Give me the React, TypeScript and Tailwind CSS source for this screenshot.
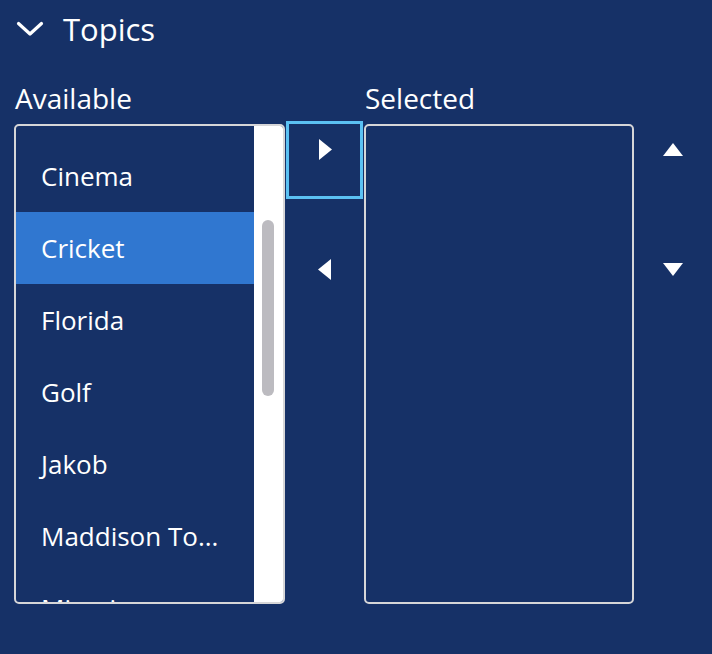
import React from 'react';

const available = ['Cinema', 'Cricket', 'Florida', 'Golf', 'Jakob', 'Maddison To...', 'Miami'];

function Tri({ dir }: { dir: 'right' | 'left' | 'up' | 'down' }) {
  if (dir === 'right' || dir === 'left') {
    return (
      <svg width="14" height="21" viewBox="0 0 14 21" className="block">
        <path d={dir === 'right' ? 'M1 0 L14 10.5 L1 21 Z' : 'M13 0 L0 10.5 L13 21 Z'} fill="#fff" />
      </svg>
    );
  }
  return (
    <svg width="20" height="13" viewBox="0 0 20 13" className="block">
      <path d={dir === 'up' ? 'M10 0 L20 13 L0 13 Z' : 'M0 0 L20 0 L10 13 Z'} fill="#fff" />
    </svg>
  );
}

export default function App() {
  return (
    <div className="h-[654px] w-[712px] overflow-hidden bg-[#163167] text-white" style={{ fontFamily: '"Open Sans", "Noto Sans", sans-serif' }}>
      <div className="flex h-[58px] items-center pl-[16px]">
        <svg width="28" height="16" viewBox="0 0 28 16" className="block">
          <path d="M2.5 2.5 L14 13 L25.5 2.5" fill="none" stroke="#fff" strokeWidth="3.2" strokeLinecap="round" strokeLinejoin="round" />
        </svg>
        <span className="ml-[19px] text-[31px] leading-none">Topics</span>
      </div>

      <div className="flex items-start pl-[14px]">
        <div className="w-[271px]">
          <div className="h-[66px] pl-[1px] pt-[26px] text-[28px] leading-none">Available</div>
          <div className="flex h-[480px] overflow-hidden rounded-[5px] border-2 border-[#d6d6d8]">
            <ul className="flex-1 overflow-hidden pt-[14px]">
              {available.map((item) => (
                <li
                  key={item}
                  className={`h-[72px] shrink-0 pl-[25px] pt-[1px] text-[26px] leading-[71px] whitespace-nowrap ${item === 'Cricket' ? 'bg-[#3077d0]' : ''}`}
                >
                  {item}
                </li>
              ))}
            </ul>
            <div className="w-[29px] bg-white pl-[8px] pt-[94px]">
              <div className="h-[176px] w-[12px] rounded-full bg-[#bcbbc0]" />
            </div>
          </div>
        </div>

        <div className="w-[79px] pl-[1px] pt-[63px]">
          <button className="flex h-[78px] w-[77px] justify-center border-[3px] border-[#5bc1f3] pt-[15px]">
            <Tri dir="right" />
          </button>
          <button className="mt-[42px] flex h-[78px] w-[77px] justify-center pt-[18px]">
            <Tri dir="left" />
          </button>
        </div>

        <div className="w-[270px]">
          <div className="h-[66px] pl-[1px] pt-[26px] text-[28px] leading-none">Selected</div>
          <div className="h-[480px] rounded-[5px] border-2 border-[#d6d6d8]" />
        </div>

        <div className="flex w-[78px] flex-col items-center pt-[85px]">
          <Tri dir="up" />
          <div className="mt-[107px]">
            <Tri dir="down" />
          </div>
        </div>
      </div>
    </div>
  );
}
